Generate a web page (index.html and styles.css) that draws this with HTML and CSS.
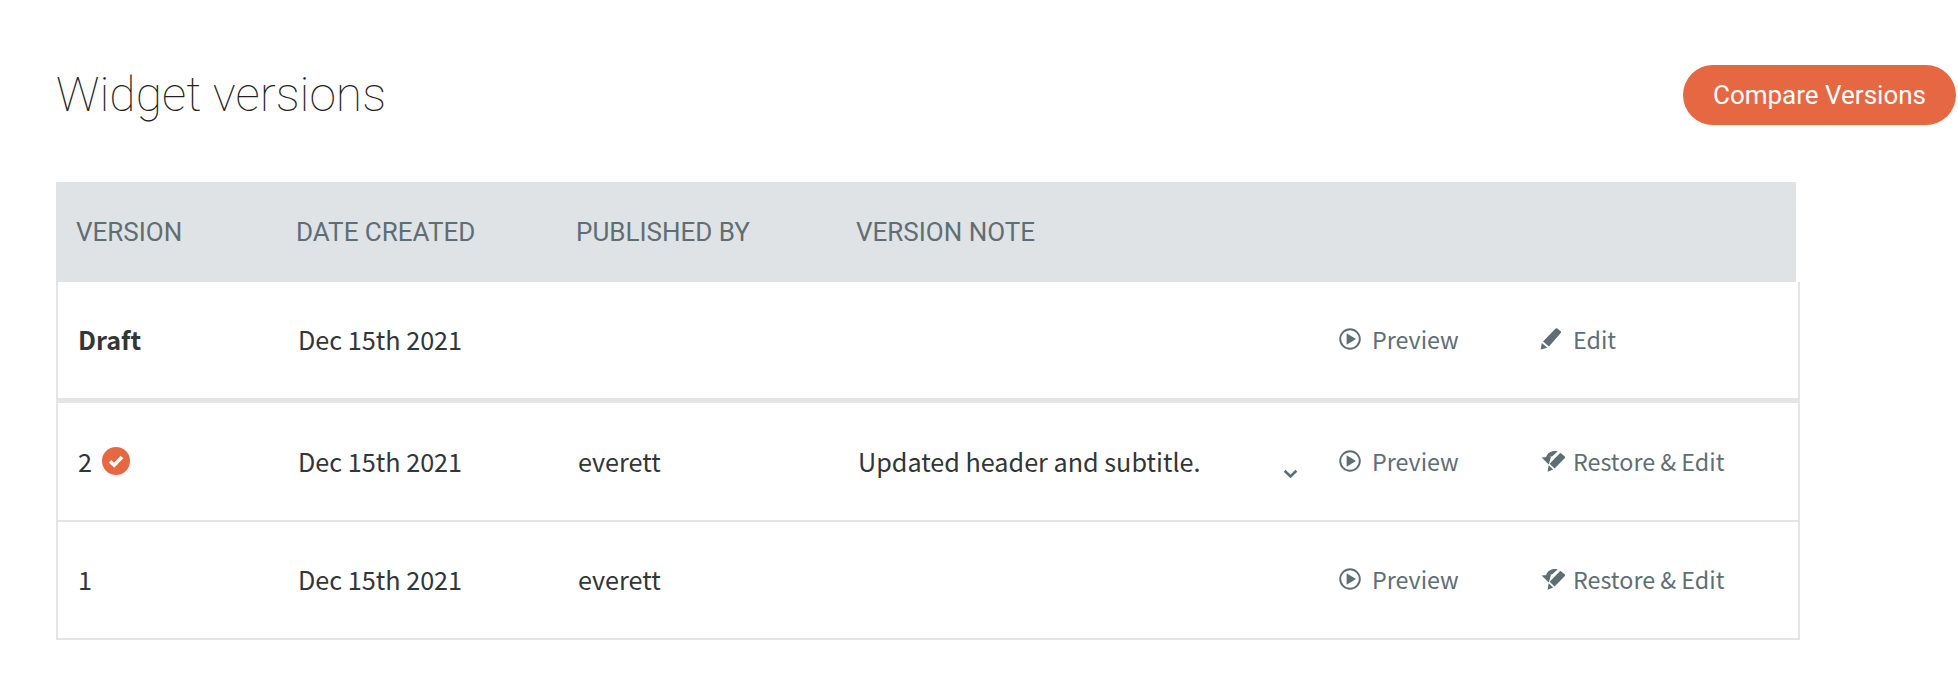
FILE: index.html
```html
<!DOCTYPE html>
<html lang="en">
<head>
  <meta charset="UTF-8" />
  <title>Widget versions</title>
  <link rel="stylesheet" href="styles.css">
</head>
<body>
  <svg class="icon-defs" aria-hidden="true">
    <symbol id="i-play" viewBox="0 0 22 22">
      <circle cx="11" cy="11" r="9.8" fill="none" stroke="currentColor" stroke-width="1.9"/>
      <path d="M7.6 5.2 17 11 7.6 16.8z" fill="currentColor"/>
    </symbol>
    <symbol id="i-pencil" viewBox="0 0 22 22">
      <path d="M15.6.6a1.3 1.3 0 0 1 1.8 0l3.2 2.7a1.3 1.3 0 0 1 .1 1.8L9 18.6 3 13.6z" fill="currentColor"/>
      <path d="M1.8 15 7.4 19.8.6 21.6z" fill="currentColor"/>
    </symbol>
    <symbol id="i-restore" viewBox="0 0 26 22">
      <path d="M1.6 7.6 11 6.8 8.8 14.4z" fill="currentColor"/>
      <path d="M6 7.4C7.4 2.8 12 .2 17.6 1.4L12 6.6C10.6 6.4 9.6 6.8 8.8 7.8z" fill="currentColor"/>
      <path d="M19.6 3.4a1.2 1.2 0 0 1 1.7 0l3.5 3a1.2 1.2 0 0 1 .1 1.7L14.6 18.6 9.6 13.8z" fill="currentColor"/>
      <path d="M8.6 15.2 13.2 19.6 7.6 21.8z" fill="currentColor"/>
    </symbol>
  </svg>

  <header class="page-head">
    <h1>Widget versions</h1>
    <button class="btn-compare">Compare Versions</button>
  </header>

  <section class="versions">
    <div class="row head">
      <div>VERSION</div>
      <div>DATE CREATED</div>
      <div>PUBLISHED BY</div>
      <div>VERSION NOTE</div>
    </div>

    <div class="list">
      <div class="row item draft">
        <div><strong>Draft</strong></div>
        <div>Dec 15th 2021</div>
        <div></div>
        <div></div>
        <a class="action"><svg class="ico"><use href="#i-play"/></svg>Preview</a>
        <a class="action"><svg class="ico"><use href="#i-pencil"/></svg>Edit</a>
      </div>

      <div class="row item">
        <div class="ver">2
          <svg class="badge" viewBox="0 0 28 28">
            <circle cx="14" cy="14" r="14" fill="#e56843"/>
            <path d="M8 14.2 12.2 18.2 20 10" fill="none" stroke="#fff" stroke-width="3.6"/>
          </svg>
        </div>
        <div>Dec 15th 2021</div>
        <div>everett</div>
        <div class="note">Updated header and subtitle.
          <svg class="chev" viewBox="0 0 14 9"><path d="M1.5 1.5 7 6.8 12.5 1.5" fill="none" stroke="currentColor" stroke-width="2.4"/></svg>
        </div>
        <a class="action"><svg class="ico"><use href="#i-play"/></svg>Preview</a>
        <a class="action"><svg class="ico wide"><use href="#i-restore"/></svg>Restore &amp; Edit</a>
      </div>

      <div class="row item">
        <div>1</div>
        <div>Dec 15th 2021</div>
        <div>everett</div>
        <div></div>
        <a class="action"><svg class="ico"><use href="#i-play"/></svg>Preview</a>
        <a class="action"><svg class="ico wide"><use href="#i-restore"/></svg>Restore &amp; Edit</a>
      </div>
    </div>
  </section>
</body>
</html>
```

FILE: styles.css
```css
* {
  box-sizing: border-box;
}

html, body {
  margin: 0;
  padding: 0;
  background: #fff;
  overflow: hidden;
}

body {
  height: 698px;
  padding: 65px 2px 0 56px;
  font-family: "Noto Sans CJK SC", "Source Sans Pro", "Noto Sans", sans-serif;
  color: #333537;
}

.icon-defs {
  display: none;
}

/* Title bar */
.page-head {
  display: flex;
  justify-content: space-between;
  align-items: center;
  height: 60px;
  margin-bottom: 57px;
}

.page-head h1 {
  margin: 0;
  font-family: Roboto, sans-serif;
  font-weight: 100;
  font-size: 48px;
  line-height: 60px;
  color: #222;
}

.btn-compare {
  width: 273px;
  height: 60px;
  padding: 0;
  border: 0;
  border-radius: 30px;
  background: #e56843;
  color: #fff;
  font-family: Roboto, sans-serif;
  font-size: 26px;
  font-weight: 400;
}

/* Table */
.versions {
  width: 1744px;
}

.row {
  display: grid;
  grid-template-columns: 220px 280px 280px 481px 201px 1fr;
  align-items: center;
}

.head {
  width: 1740px;
  height: 100px;
  padding-left: 20px;
  background: #dfe3e6;
  font-family: Roboto, sans-serif;
  font-size: 26px;
  font-weight: 400;
  color: #5f6e75;
}

.list {
  border: 2px solid #e5e5e5;
  border-top: 0;
}

.item {
  height: 119px;
  padding: 0 0 2px 20px;
  font-size: 25.2px;
  line-height: 32px;
  border-bottom: 2px solid #e5e5e5;
}

.item:last-child {
  height: 116px;
  border-bottom: 0;
}

.draft {
  height: 121px;
  border-bottom-width: 5px;
}

.draft strong {
  font-weight: 700;
}

.ver {
  display: flex;
  align-items: center;
  gap: 10px;
}

.badge {
  width: 28px;
  height: 28px;
}

.note {
  position: relative;
}

.chev {
  position: absolute;
  left: 425px;
  top: 24px;
  width: 15px;
  height: 10px;
  color: #5f6e75;
}

.action {
  display: flex;
  align-items: center;
  gap: 11px;
  font-size: 23.3px;
  color: #5f6e75;
}

.ico {
  width: 22px;
  height: 22px;
  flex: none;
}

.ico.wide {
  width: 26px;
  margin-right: -4px;
}
```
